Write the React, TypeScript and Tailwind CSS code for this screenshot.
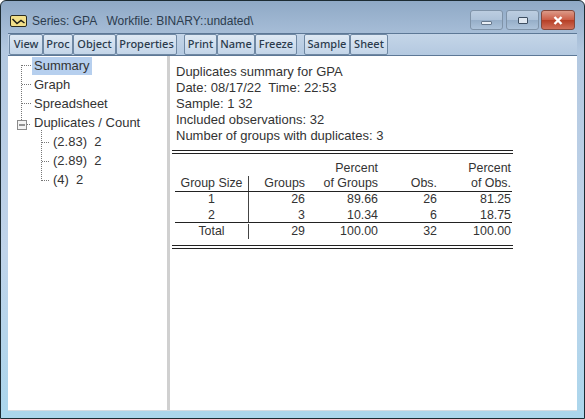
import { ReactNode } from "react";

const TOOLS = [
  ["View", "w-[34px]"],
  ["Proc", "w-[30px]"],
  ["Object", "w-[43px]"],
  ["Properties", "w-[61px]"],
  null,
  ["Print", "w-[33px]"],
  ["Name", "w-[38px]"],
  ["Freeze", "w-[42px]"],
  null,
  ["Sample", "w-[46px]"],
  ["Sheet", "w-[38px]"],
] as const;

const TREE = [
  { label: "Summary", pad: "pl-[24px]", selected: true },
  { label: "Graph", pad: "pl-[24px]" },
  { label: "Spreadsheet", pad: "pl-[24px]" },
  { label: "Duplicates / Count", pad: "pl-[24px]" },
  { label: "(2.83)\u00a0 2", pad: "pl-[43px]" },
  { label: "(2.89)\u00a0 2", pad: "pl-[43px]" },
  { label: "(4)\u00a0 2", pad: "pl-[43px]" },
];

function TitleIcon() {
  return (
    <svg width="17" height="12" viewBox="0 0 17 12" className="shrink-0">
      <rect x="0.5" y="0.5" width="16" height="11" rx="1.5" fill="#f3e08a" stroke="#2b2b1f" />
      <path d="M2.5 4 L7 8.5 L11 5.5 L14.5 8" fill="none" stroke="#1d1d16" strokeWidth="1.5" />
    </svg>
  );
}

function WinButton({ children, close }: { children: ReactNode; close?: boolean }) {
  return (
    <div
      className={
        close
          ? "ml-[-1px] flex h-[20px] w-[34px] items-center justify-center rounded-[3px] border border-[#84483c] bg-[linear-gradient(#dc9a88,#cc5f48_48%,#b63f26_52%,#d0705a)]"
          : "flex h-[20px] w-[33px] items-center justify-center rounded-[3px] border border-[#7f93a8] bg-[linear-gradient(#bccde0,#afc3d9_48%,#96aec8_52%,#adc3da)]"
      }
    >
      {children}
    </div>
  );
}

function Tree() {
  return (
    <div className="relative h-full w-[159px] shrink-0 bg-white">
      <svg width="60" height="140" className="absolute left-0 top-0" fill="none" stroke="#777" strokeDasharray="1 1">
        <path d="M13.5 9V64M14 9.5H23M14 28.5H23M14 47.5H23M33.5 74V125M34 86.5H41M34 105.5H41M34 124.5H41M19 68.5H23" />
      </svg>
      <svg width="10" height="10" viewBox="0 0 10 10" className="absolute left-[9px] top-[64px]">
        <rect x="0.5" y="0.5" width="9" height="9" fill="#f4f4f4" stroke="#8a8a8a" />
        <path d="M2 5H8" stroke="#333" />
      </svg>
      {TREE.map((n) => (
        <div key={n.label} className={`relative flex h-[19px] items-center text-[#333] ${n.pad}`}>
          <span className={n.selected ? "flex h-[18px] items-center bg-[#b6cfee] px-[2px]" : "px-[2px]"}>{n.label}</span>
        </div>
      ))}
    </div>
  );
}

const ROWS = [
  ["1", "26", "89.66", "26", "81.25"],
  ["2", "3", "10.34", "6", "18.75"],
];

function Cells({ cells, className }: { cells: string[]; className: string }) {
  return (
    <div className={`grid grid-cols-[74px_56px_73px_59px_74px] leading-[15px] ${className}`}>
      <div className="border-r border-[#444] text-center">{cells[0]}</div>
      <div className="text-right">{cells[1]}</div>
      <div className="text-right">{cells[2]}</div>
      <div className="text-right">{cells[3]}</div>
      <div className="text-right">{cells[4]}</div>
    </div>
  );
}

function Report() {
  return (
    <div className="min-w-0 flex-1 bg-white pl-[2px] pt-[8px] text-[#333]">
      <div className="pl-[4px] text-[13px] leading-[16px]">
        <p>Duplicates summary for GPA</p>
        <p>Date: 08/17/22&nbsp; Time: 22:53</p>
        <p>Sample: 1 32</p>
        <p>Included observations: 32</p>
        <p>Number of groups with duplicates: 3</p>
      </div>
      <div className="mt-[6px] w-[341px] text-[12.4px]">
        <div className="h-[4px] border-y border-[#222]" />
        <div className="ml-[3px] mt-[6px] w-[337px]">
          <div className="grid h-[16px] grid-cols-[74px_56px_73px_59px_74px] leading-[16px]">
            <div className="col-start-3 text-right">Percent</div>
            <div className="col-start-5 text-right">Percent</div>
          </div>
          <Cells cells={["Group Size", "Groups", "of Groups", "Obs.", "of Obs."]} className="h-[16px] border-b border-[#222]" />
          <Cells cells={ROWS[0]} className="h-[16px]" />
          <Cells cells={ROWS[1]} className="h-[15px] border-b border-[#222]" />
          <Cells cells={["Total", "29", "100.00", "32", "100.00"]} className="h-[16px] pt-px" />
        </div>
        <div className="mt-[6px] h-[4px] border-y border-[#222]" />
      </div>
    </div>
  );
}

export default function App() {
  return (
    <div className="flex h-[419px] w-[585px] flex-col overflow-hidden rounded-t-[6px] border border-[#1c2b33] bg-[linear-gradient(#8fa9c6,#b3c8e0_12%,#c0d4ea_60%,#abd6ec)] font-['Liberation_Sans',sans-serif] text-[13px]">
      <div className="flex h-[32px] shrink-0 items-center pl-[9px] pr-[9px] pt-[8px] text-[12px]">
        <TitleIcon />
        <span className="ml-[5px] whitespace-pre text-[#2c3c4e]">Series: GPA   Workfile: BINARY::undated\</span>
        <div className="ml-auto flex -translate-y-[1px] gap-[3px]">
          <WinButton>
            <div className="mt-[5px] h-[4px] w-[11px] rounded-[1px] border border-[#66788c] bg-[#e8eef5]" />
          </WinButton>
          <WinButton>
            <div className="h-[7px] w-[10px] rounded-[1px] border border-[#3d4e61] bg-[#dfe7f0]" />
          </WinButton>
          <WinButton close>
            <svg width="12" height="9" viewBox="0 0 12 9">
              <path d="M2.5 1 L9.5 8 M9.5 1 L2.5 8" stroke="#fff" strokeWidth="2.4" />
            </svg>
          </WinButton>
        </div>
      </div>
      <div className="ml-[7px] mr-[7px] flex h-[23px] shrink-0 items-center border-y border-[#5d7896] bg-[linear-gradient(#c4d5e8,#b4c9e0)] pl-px font-['Noto_Sans',sans-serif] text-[11px] font-medium text-[#2b3b4c]">
        {TOOLS.map((t, i) =>
          t ? (
            <div
              key={t[0]}
              className={`flex h-[21px] items-center justify-center rounded-[2px] border border-[#6f88a3] bg-[linear-gradient(#dfe9f4,#c3d5e8)] ${t[1]}`}
            >
              {t[0]}
            </div>
          ) : (
            <div key={i} className="w-[7px]" />
          ),
        )}
      </div>
      <div className="ml-[7px] mr-[7px] flex min-h-0 flex-1 border-b border-[#d5dbe2]">
        <Tree />
        <div className="w-[3px] shrink-0 bg-[#d0d0d0]" />
        <Report />
      </div>
      <div className="h-[7px] shrink-0" />
    </div>
  );
}
